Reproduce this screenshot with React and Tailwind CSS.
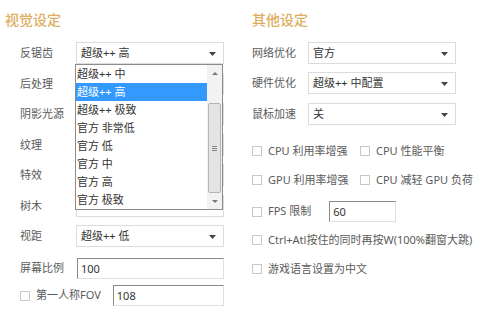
import React from "react";

const font = { fontFamily: '"Noto Sans", "Noto Sans CJK SC", sans-serif' };

const Caret = () => (
  <svg width="7" height="4" viewBox="0 0 7 4" className="absolute right-[7px] top-[9px]">
    <path d="M0 0 L7 0 L3.5 4 Z" fill="#444" />
  </svg>
);

const Select = ({ value, className = "" }) => (
  <div className={`relative h-[22px] w-[148px] border border-[#dcdcdc] bg-white pl-[4px] text-[11px] leading-[20px] text-[#333] ${className}`}>
    {value}
    <Caret />
  </div>
);

const Input = ({ value, className = "" }) => (
  <div className={`h-[21px] border border-t-[#8a8a8a] border-l-[#8a8a8a] border-r-[#e0e0e0] border-b-[#e0e0e0] bg-white pl-[3px] text-[11px] leading-[19px] text-[#333] ${className}`}>
    {value}
  </div>
);

const Box = () => <span className="inline-block h-[10px] w-[10px] shrink-0 border border-[#c8c8c8] bg-white" />;

const Check = ({ label, className = "" }) => (
  <div className={`flex items-center gap-[6px] text-[11px] text-[#5a5a5a] ${className}`}>
    <Box />
    <span>{label}</span>
  </div>
);

const Row = ({ label, children, className = "" }) => (
  <div className={`flex h-[22px] items-center pl-[20px] ${className}`}>
    <span className="w-[56px] shrink-0 text-[11px] text-[#5a5a5a]">{label}</span>
    {children}
  </div>
);

const items = ["超级++ 中", "超级++ 高", "超级++ 极致", "官方 非常低", "官方 低", "官方 中", "官方 高", "官方 极致"];

const Dropdown = () => (
  <div className="absolute left-[-1px] top-[22px] z-10 flex h-[146px] w-[148px] border border-[#8c8c8c] bg-white">
    <div className="flex-1">
      {items.map((it, i) => (
        <div
          key={i}
          className={`h-[18px] pl-[1px] text-[11px] leading-[18px] ${i === 1 ? "bg-[#3399ff] text-white" : "text-[#333]"}`}
        >
          {it}
        </div>
      ))}
    </div>
    <div className="flex w-[15px] flex-col bg-[#f2f2f2]">
      <div className="flex h-[16px] items-center justify-center">
        <svg width="6" height="3" viewBox="0 0 6 3"><path d="M0 3 L6 3 L3 0 Z" fill="#777" /></svg>
      </div>
      <div className="h-[22px]" />
      <div className="mx-[1px] flex flex-1 items-center justify-center rounded-[2px] border border-[#b4b4b4] bg-[#e4e4e4]">
        <div className="flex flex-col gap-[1px]">
          <span className="block h-px w-[5px] bg-[#888]" />
          <span className="block h-px w-[5px] bg-[#888]" />
          <span className="block h-px w-[5px] bg-[#888]" />
        </div>
      </div>
      <div className="flex h-[16px] items-center justify-center">
        <svg width="6" height="3" viewBox="0 0 6 3"><path d="M0 0 L6 0 L3 3 Z" fill="#777" /></svg>
      </div>
    </div>
  </div>
);

export default function App() {
  return (
    <div className="flex h-[312px] w-[500px] overflow-hidden bg-white" style={font}>
      <div className="w-[252px] shrink-0">
        <div className="pl-[5px] pt-[10px] text-[14px] font-medium leading-[20px] text-[#dcae62]">视觉设定</div>
        <Row label="反锯齿" className="mt-[12px]">
          <div className="relative">
            <Select value="超级++ 高" />
            <Dropdown />
          </div>
        </Row>
        <Row label="后处理" className="mt-[9px]"><Select value="" /></Row>
        <Row label="阴影光源" className="mt-[8px]"><Select value="" /></Row>
        <Row label="纹理" className="mt-[9px]"><Select value="" /></Row>
        <Row label="特效" className="mt-[8px]"><Select value="" /></Row>
        <Row label="树木" className="mt-[9px]"><Select value="" /></Row>
        <Row label="视距" className="mt-[8px]"><Select value="超级++ 低" /></Row>
        <Row label="屏幕比例" className="mt-[10px]">
          <Input value="100" className="ml-[1px] w-[147px]" />
        </Row>
        <div className="mt-[6px] flex h-[21px] items-center pl-[20px]">
          <Check label="第一人称FOV" />
          <Input value="108" className="ml-[12px] w-[111px]" />
        </div>
      </div>

      <div className="flex-1">
        <div className="pt-[10px] text-[14px] font-medium leading-[20px] text-[#dcae62]">其他设定</div>
        <div className="mt-[12px] flex h-[22px] items-center">
          <span className="w-[56px] text-[11px] text-[#5a5a5a]">网络优化</span>
          <Select value="官方" />
        </div>
        <div className="mt-[8px] flex h-[22px] items-center">
          <span className="w-[56px] text-[11px] text-[#5a5a5a]">硬件优化</span>
          <Select value="超级++ 中配置" />
        </div>
        <div className="mt-[9px] flex h-[22px] items-center">
          <span className="w-[56px] text-[11px] text-[#5a5a5a]">鼠标加速</span>
          <Select value="关" />
        </div>
        <div className="mt-[15px] flex h-[22px] items-center">
          <Check label="CPU 利用率增强" className="w-[108px]" />
          <Check label="CPU 性能平衡" />
        </div>
        <div className="mt-[7px] flex h-[22px] items-center">
          <Check label="GPU 利用率增强" className="w-[108px]" />
          <Check label="CPU 减轻 GPU 负荷" />
        </div>
        <div className="mt-[10px] flex h-[21px] items-center">
          <Check label="FPS 限制" />
          <Input value="60" className="ml-[18px] w-[67px]" />
        </div>
        <Check label="Ctrl+Atl按住的同时再按W(100%翻窗大跳)" className="mt-[7px] h-[22px]" />
        <Check label="游戏语言设置为中文" className="mt-[7px] h-[22px]" />
      </div>
    </div>
  );
}
